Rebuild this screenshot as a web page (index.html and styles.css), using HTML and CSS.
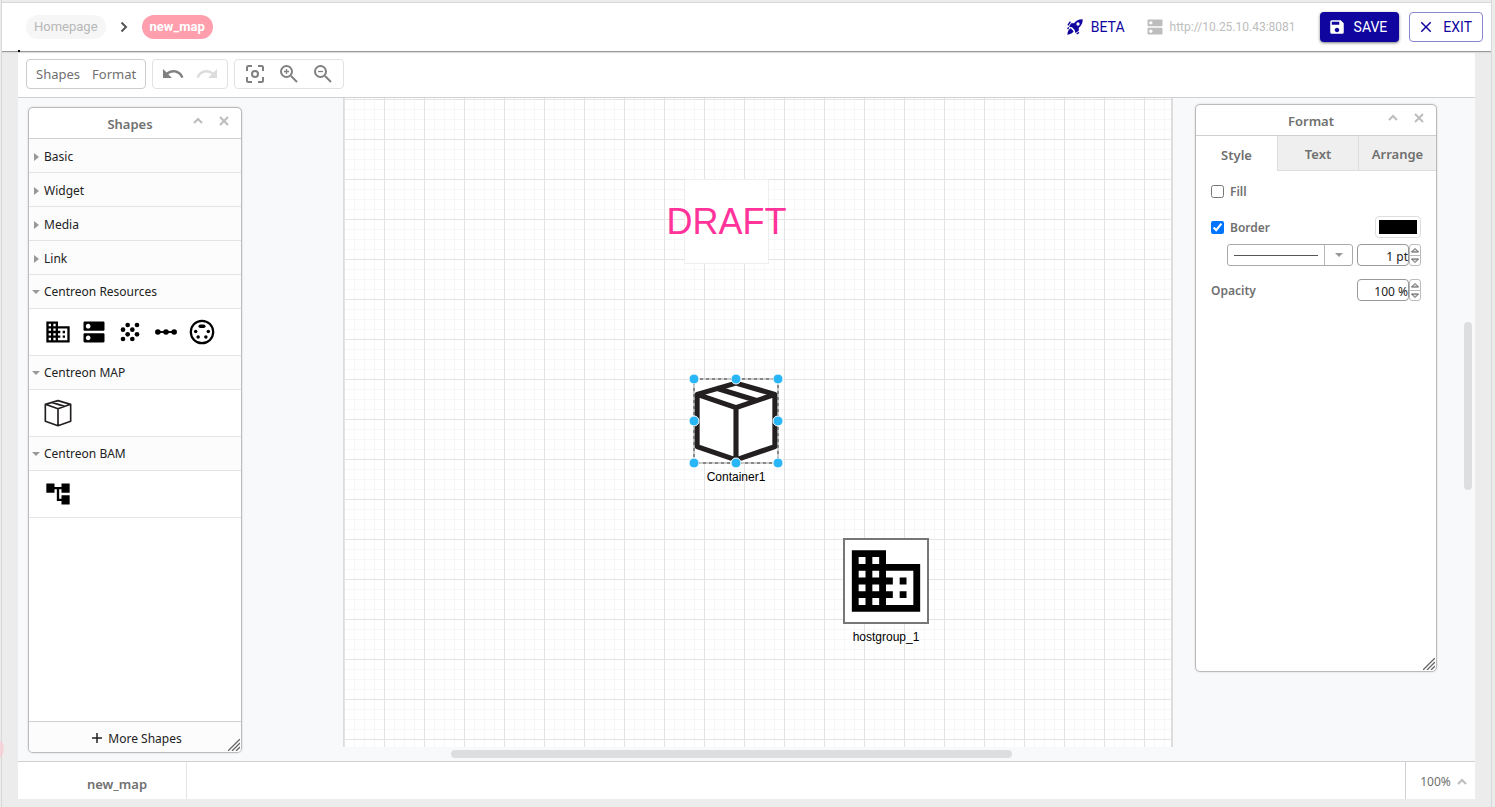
FILE: index.html
```html
<!DOCTYPE html>
<html lang="en">
<head>
<meta charset="utf-8">
<title>new_map</title>
<link rel="stylesheet" href="styles.css">
</head>
<body>
<svg class="defs" aria-hidden="true">
  <symbol id="i-group" viewBox="0 0 24 24"><path d="M12 7V3H2v18h20V7H12zM6 19H4v-2h2v2zm0-4H4v-2h2v2zm0-4H4V9h2v2zm0-4H4V5h2v2zm4 12H8v-2h2v2zm0-4H8v-2h2v2zm0-4H8V9h2v2zm0-4H8V5h2v2zm10 12h-8v-2h2v-2h-2v-2h2v-2h-2V9h8v10zm-2-8h-2v2h2v-2zm0 4h-2v2h2v-2z"/></symbol>
  <symbol id="i-host" viewBox="0 0 24 24"><path d="M20 13H4c-.55 0-1 .45-1 1v6c0 .55.45 1 1 1h16c.55 0 1-.45 1-1v-6c0-.55-.45-1-1-1zM7 19c-1.100 0-2-.9-2-2s.9-2 2-2 2 .9 2 2-.9 2-2 2zM20 3H4c-.55 0-1 .45-1 1v6c0 .55.45 1 1 1h16c.55 0 1-.45 1-1V4c0-.55-.45-1-1-1zM7 9c-1.100 0-2-.9-2-2s.9-2 2-2 2 .9 2 2-.9 2-2 2z"/></symbol>
  <symbol id="i-box" viewBox="0 0 84 84"><path d="M42 5L80 16v51L42 80 4 67V16zM4 16l38 13 38-13M42 29v51M23 10l39 12" fill="none" stroke="#231f20" stroke-linejoin="round"/></symbol>
  <symbol id="i-up" viewBox="0 0 10 10"><path d="M1 7l4-4 4 4" fill="none" stroke="#bdbdbd" stroke-width="2"/></symbol>
  <symbol id="i-x" viewBox="0 0 10 10"><path d="M1 1l8 8M9 1L1 9" fill="none" stroke="#bdbdbd" stroke-width="2"/></symbol>
  <symbol id="i-grip" viewBox="0 0 12 12"><path d="M0 12L12 0M4 12l8-8M8 12l4-4" fill="none" stroke="#666" stroke-width="1.3"/></symbol>
  <symbol id="i-step-up" viewBox="0 0 10 10"><path d="M1.500 7h7L5 3.500z" fill="#ddd" stroke="#555"/></symbol>
  <symbol id="i-step-down" viewBox="0 0 10 10"><path d="M1.500 3h7L5 6.500z" fill="#ddd" stroke="#555"/></symbol>
</svg>
<div class="frame">
  <header class="topbar">
    <nav class="crumbs" aria-label="Breadcrumb">
      <a class="chip" href="#">Homepage</a>
      <svg class="chevron" viewBox="0 0 8 12"><path d="M1.500 1.500L6 6l-4.500 4.500" fill="none" stroke="#555" stroke-width="2"/></svg>
      <a class="chip chip-current" href="#">new_map</a>
    </nav>
    <div class="actions">
      <a class="beta" href="#">
        <svg class="i16" viewBox="0 0 24 24"><path fill="#10069f" fill-rule="evenodd" d="M23.500.5c.3 5-1.500 9-6 13l.3 2.500c.1 1-.3 1.800-1 2.300L12.500 21l-1-4.500-4-4L3 11.500 5.700 7.200c.5-.7 1.300-1.100 2.300-1l2.500.3C14 2.500 18 .2 23.500.5zM16.500 5a2.500 2.500 0 100 5 2.500 2.500 0 000-5z"/><path d="M5.500 14l4.500 4.500C8.500 21.500 5.500 23 .5 23.500 1 18.500 2.500 15.500 5.500 14z" fill="#10069f"/><path d="M1.500 9.500L5 4M.8 15l2-2.500M14.500 22.500L18 20" stroke="#10069f" stroke-width="2.200"/></svg>
        BETA</a>
      <div class="server">
        <svg class="i20" viewBox="0 0 24 24" fill="#bdbdbd"><use href="#i-host"/></svg>
        <span>http://10.25.10.43:8081</span>
      </div>
      <button class="btn btn-save"><svg class="i18" viewBox="0 0 24 24"><path fill="#fff" d="M17 3H5a2 2 0 00-2 2v14a2 2 0 002 2h14a2 2 0 002-2V7l-4-4zm-5 16c-1.660 0-3-1.340-3-3s1.340-3 3-3 3 1.340 3 3-1.340 3-3 3zm3-10H5V5h10v4z"/></svg>SAVE</button>
      <button class="btn btn-exit"><svg class="i18" viewBox="0 0 24 24"><path fill="#10069f" d="M19 6.410L17.590 5 12 10.590 6.410 5 5 6.410 10.590 12 5 17.590 6.410 19 12 13.410 17.590 19 19 17.590 13.410 12z"/></svg>EXIT</button>
    </div>
    <span class="caret"></span>
  </header>

  <main class="app">
    <div class="toolbar">
      <div class="tools tools-text">
        <button class="tool-text">Shapes</button>
        <button class="tool-text">Format</button>
      </div>
      <div class="tools tools-history">
        <button class="tool" aria-label="Undo"><svg class="i24" viewBox="0 0 24 24"><path fill="#808080" d="M12.500 8c-2.650 0-5.050.990-6.900 2.600L2 7v9h9l-3.620-3.620c1.390-1.160 3.160-1.880 5.120-1.880 3.540 0 6.550 2.310 7.600 5.500l2.370-.780C21.080 11.030 17.150 8 12.500 8z"/></svg></button>
        <button class="tool" aria-label="Redo"><svg class="i24" viewBox="0 0 24 24"><path fill="#dcdcdc" d="M18.400 10.600C16.550 8.990 14.150 8 11.500 8c-4.650 0-8.580 3.030-9.960 7.220L3.900 16c1.050-3.190 4.050-5.500 7.600-5.500 1.950 0 3.730.720 5.120 1.880L13 16h9V7l-3.600 3.600z"/></svg></button>
      </div>
      <div class="tools tools-zoom">
        <button class="tool" aria-label="Fit"><svg class="i24" viewBox="0 0 24 24" fill="none" stroke="#808080" stroke-width="2"><path d="M4 9V5.500Q4 4 5.500 4H9M15 4h3.500Q20 4 20 5.500V9M20 15v3.500q0 1.500-1.500 1.500H15M9 20H5.500Q4 20 4 18.500V15"/><circle cx="12" cy="12" r="3"/></svg></button>
        <button class="tool" aria-label="Zoom in"><svg class="i24" viewBox="0 0 24 24" fill="none" stroke="#808080" stroke-width="2"><circle cx="9.500" cy="9.500" r="5.500"/><path d="M14 14l6 6"/><path d="M9.500 7v5M7 9.500h5" stroke-width="1.300"/></svg></button>
        <button class="tool" aria-label="Zoom out"><svg class="i24" viewBox="0 0 24 24" fill="none" stroke="#808080" stroke-width="2"><circle cx="9.500" cy="9.500" r="5.500"/><path d="M14 14l6 6"/><path d="M7 9.500h5" stroke-width="1.300"/></svg></button>
      </div>
    </div>

    <div class="workspace">
      <div class="page">
        <div class="node node-draft"><span>DRAFT</span></div>
        <div class="node node-container">
          <svg class="node-art" viewBox="0 0 84 84" stroke-width="5"><use href="#i-box"/></svg>
          <svg class="selection" viewBox="0 0 96 96">
            <rect x="6" y="6" width="84" height="84" fill="none" stroke="#999"/>
            <rect x="6" y="6" width="84" height="84" fill="none" stroke="#444" stroke-dasharray="3 3"/>
            <g fill="#29b6f6" stroke="#fff"><circle cx="6" cy="6" r="5"/><circle cx="48" cy="6" r="5"/><circle cx="90" cy="6" r="5"/><circle cx="6" cy="48" r="5"/><circle cx="90" cy="48" r="5"/><circle cx="6" cy="90" r="5"/><circle cx="48" cy="90" r="5"/><circle cx="90" cy="90" r="5"/></g>
          </svg>
          <span class="node-label">Container1</span>
        </div>
        <div class="node node-group">
          <svg class="node-art node-framed" viewBox="0 0 24 24"><use href="#i-group"/></svg>
          <span class="node-label">hostgroup_1</span>
        </div>
      </div>
      <div class="bar-h"></div>
      <div class="bar-v"></div>

      <section class="panel panel-shapes">
        <header class="panel-head"><h2>Shapes</h2>
          <button class="tool" aria-label="Collapse"><svg class="i10"><use href="#i-up"/></svg></button>
          <button class="tool" aria-label="Close"><svg class="i10"><use href="#i-x"/></svg></button>
        </header>
        <button class="section">Basic</button>
        <button class="section">Widget</button>
        <button class="section">Media</button>
        <button class="section">Link</button>
        <button class="section open">Centreon Resources</button>
        <div class="shapes">
          <button class="tool" aria-label="Host group"><svg class="i28" viewBox="0 0 24 24"><use href="#i-group"/></svg></button>
          <button class="tool" aria-label="Host"><svg class="i28" viewBox="0 0 24 24"><use href="#i-host"/></svg></button>
          <button class="tool" aria-label="Service group"><svg class="i28" viewBox="0 0 24 24"><g><circle cx="10" cy="6" r="2"/><circle cx="18" cy="6" r="2"/><circle cx="6" cy="10" r="2"/><circle cx="14" cy="10" r="2"/><circle cx="10" cy="14" r="2"/><circle cx="18" cy="14" r="2"/><circle cx="6" cy="18" r="2"/><circle cx="14" cy="18" r="2"/></g></svg></button>
          <button class="tool" aria-label="Service"><svg class="i28" viewBox="0 0 24 24"><path d="M4 12h16" stroke="#000" stroke-width="1.600"/><circle cx="5" cy="12" r="2.400"/><circle cx="12" cy="12" r="2.400"/><circle cx="19" cy="12" r="2.400"/></svg></button>
          <button class="tool" aria-label="Meta service"><svg class="i28" viewBox="0 0 24 24"><circle cx="12" cy="12" r="9.600" fill="none" stroke="#000" stroke-width="1.900"/><rect x="9" y="5.500" width="6" height="3" rx="1.500"/><circle cx="6.600" cy="11.500" r="1.500"/><circle cx="17.400" cy="11.500" r="1.500"/><circle cx="8.700" cy="16.200" r="1.500"/><circle cx="15.300" cy="16.200" r="1.500"/></svg></button>
        </div>
        <button class="section open">Centreon MAP</button>
        <div class="shapes"><button class="tool" aria-label="Container"><svg class="i28" viewBox="0 0 84 84" stroke-width="5"><use href="#i-box"/></svg></button></div>
        <button class="section open">Centreon BAM</button>
        <div class="shapes"><button class="tool" aria-label="Business activity"><svg class="i28" viewBox="0 0 24 24"><path d="M22 11V3h-7v3H9V3H2v8h7V8h2v10h4v3h7v-8h-7v3h-2V8h2v3z"/></svg></button></div>
        <button class="more"><svg class="i10" viewBox="0 0 10 10"><path d="M5 0v10M0 5h10" stroke="#222" stroke-width="1.500"/></svg>More Shapes</button>
        <svg class="grip"><use href="#i-grip"/></svg>
      </section>

      <section class="panel panel-format">
        <header class="panel-head"><h2>Format</h2>
          <button class="tool" aria-label="Collapse"><svg class="i10"><use href="#i-up"/></svg></button>
          <button class="tool" aria-label="Close"><svg class="i10"><use href="#i-x"/></svg></button>
        </header>
        <div class="tabs" role="tablist">
          <button class="tab active" role="tab" aria-selected="true">Style</button>
          <button class="tab" role="tab">Text</button>
          <button class="tab" role="tab">Arrange</button>
        </div>
        <div class="options">
          <label class="check fill-row"><input type="checkbox">Fill</label>
          <div class="row">
            <label class="check"><input type="checkbox" checked>Border</label>
            <button class="swatch" aria-label="Border color"></button>
          </div>
          <div class="row row-line">
            <button class="line-style" aria-label="Line style"><span class="line-sample"></span><span class="line-arrow"></span></button>
            <div class="stepper"><input type="text" value="1 pt" aria-label="Border width">
              <div class="steps"><button aria-label="Increase width"><svg class="i10"><use href="#i-step-up"/></svg></button><button aria-label="Decrease width"><svg class="i10"><use href="#i-step-down"/></svg></button></div></div>
          </div>
          <div class="row row-opacity">
            <label for="opacity">Opacity</label>
            <div class="stepper"><input id="opacity" type="text" value="100 %">
              <div class="steps"><button aria-label="Increase opacity"><svg class="i10"><use href="#i-step-up"/></svg></button><button aria-label="Decrease opacity"><svg class="i10"><use href="#i-step-down"/></svg></button></div></div>
          </div>
        </div>
        <svg class="grip"><use href="#i-grip"/></svg>
      </section>
    </div>

    <footer class="statusbar">
      <button class="map-tab">new_map</button>
      <button class="zoom-level">100%<svg class="i10"><use href="#i-up"/></svg></button>
    </footer>
  </main>
</div>
<span class="edge-dot"></span>
</body>
</html>
```
FILE: styles.css
```css
*, *::before { box-sizing: border-box; }
body { margin: 0; background: #ececec; font-family: "Noto Sans", "Open Sans", sans-serif; font-size: 12px; color: #707070; overflow: hidden; }
button { font: inherit; color: inherit; background: none; border: 0; padding: 0; cursor: pointer; }
a { color: inherit; text-decoration: none; }
svg { display: block; flex: none; }
.defs { position: absolute; width: 0; height: 0; }
.i10 { width: 10px; height: 10px; }
.i16 { width: 16px; height: 16px; }
.i18 { width: 18px; height: 18px; }
.i20 { width: 20px; height: 20px; }
.i24 { width: 24px; height: 24px; }
.i28 { width: 28px; height: 28px; }

.frame { height: 100vh; margin: 0 3px 0 1px; padding: 2px 0 8px; display: flex; flex-direction: column; border: 1px solid #d8d8d8; border-width: 0 1px; }
.topbar { position: relative; flex: none; height: 50px; display: flex; justify-content: space-between; align-items: center; padding: 0 8px 0 24px; background: #fff; border-top: 1px solid #d8d8d8; border-bottom: 1px solid #999; box-shadow: 0 1px 1px #ddd; font-family: Roboto, "Liberation Sans", sans-serif; font-size: 14px; z-index: 1; }
.caret { position: absolute; left: 16px; bottom: -1px; width: 2px; height: 2px; background: #000; }
.crumbs { display: flex; align-items: center; gap: 14px; }
.chip { height: 24px; line-height: 24px; padding: 0 8px; border-radius: 12px; background: #f6f6f6; color: #b8b8b8; font-size: 13px; }
.chip-current { background: #ff9fae; color: #fff; font-weight: 700; }
.chevron { width: 8px; height: 12px; }
.actions { display: flex; align-items: center; color: #10069f; }
.beta { display: flex; align-items: center; gap: 8px; margin-right: 20px; }
.server { display: flex; align-items: center; gap: 5px; margin-right: 24px; color: #bdbdbd; font-size: 12px; }
.btn { height: 30px; display: flex; align-items: center; border-radius: 4px; }
.btn-save { background: #10069f; color: #fff; gap: 8px; padding: 0 12px 0 8px; margin-right: 10px; box-shadow: 0 1px 3px #777; }
.btn-exit { border: 1px solid #8a85cf; gap: 8px; padding: 0 10px 0 7px; }

.app { flex: 1; min-height: 0; margin: 0 16px; display: flex; flex-direction: column; background: #fff; }
.toolbar { flex: none; height: 46px; display: flex; align-items: center; gap: 6px; padding: 0 8px 2px; border-bottom: 1px solid #d0d0d4; }
.tools { height: 30px; display: flex; align-items: center; border: 1px solid #e2e2e2; border-radius: 4px; }
.tools-text { gap: 12px; padding: 0 9px; border-color: #ccc; font-size: 13px; }
.tools-history { gap: 10px; padding: 0 8px; }
.tools-zoom { gap: 10px; padding: 0 8px; }

.workspace { position: relative; flex: 1; min-height: 0; background: #f8f9fb; padding: 0 302px 14px 325px; }
.page { position: relative; height: 100%; overflow: hidden; border: 1px solid #ddd; border-width: 0 2px 0 1px; background-color: #fff; background-image: linear-gradient(#e3e3e3 1px, transparent 1px), linear-gradient(90deg, #e3e3e3 1px, transparent 1px), linear-gradient(#f7f7f7 1px, transparent 1px), linear-gradient(90deg, #f7f7f7 1px, transparent 1px); background-size: 40px 40px, 40px 40px, 10px 10px, 10px 10px; background-position: 0 1px; }
.bar-h { position: absolute; left: 433px; right: 463px; bottom: 3px; height: 8px; border-radius: 4px; background: #dcdee0; }
.bar-v { position: absolute; right: 3px; top: 224px; width: 8px; height: 168px; border-radius: 4px; background: #dcdee0; }

.node { position: absolute; display: flex; flex-direction: column; align-items: center; width: 86px; font-family: "Liberation Sans", Arial, sans-serif; color: #000; }
.node-draft { left: 340px; top: 81px; width: 85px; height: 85px; justify-content: center; background: #fff; border: 1px solid #eee; font-size: 36px; color: #ff3399; white-space: nowrap; }
.node-container { left: 349px; top: 280px; }
.node-group { left: 499px; top: 440px; }
.node-art { width: 86px; height: 86px; background: #fff; }
.node-framed { border: 2px solid #777; }
.node-label { margin-top: 5px; line-height: 16px; white-space: nowrap; }
.selection { position: absolute; left: -5px; top: -5px; width: 96px; height: 96px; }

.panel { position: absolute; display: flex; flex-direction: column; background: #fff; border: 1px solid #bbb; border-radius: 5px; box-shadow: 0 0 2px #ccc; overflow: hidden; }
.panel-shapes { left: 10px; top: 9px; bottom: 8px; width: 214px; }
.panel-format { right: 38px; top: 6px; width: 242px; height: 568px; }
.panel-head { flex: none; height: 31px; display: flex; align-items: center; gap: 16px; padding: 0 12px 4px 0; border-bottom: 1px solid #d0d0d0; }
.panel-head h2 { flex: 1; margin: 0; padding: 6px 0 0 54px; text-align: center; font-size: 13px; font-weight: 600; }
.section { flex: none; height: 34px; display: flex; align-items: center; gap: 5px; padding: 2px 5px 0; background: #fcfcfc; border-bottom: 1px solid #e4e4e4; color: #222; font-size: 12px; }
.section::before { content: ""; border: solid transparent; border-width: 4px 0 4px 5px; border-left-color: #999; }
.section.open { padding: 0 3px; gap: 4px; }
.section.open::before { border-width: 4px 4px 0; border-color: #999 transparent; }
.shapes { flex: none; height: 47px; display: flex; align-items: center; gap: 8px; padding: 0 15px; border-bottom: 1px solid #e4e4e4; }
.more { flex: none; height: 31px; margin-top: auto; display: flex; align-items: center; justify-content: center; gap: 6px; padding: 2px 0 0 4px; background: #fcfcfc; border-top: 1px solid #d0d0d0; color: #222; }
.grip { position: absolute; right: 1px; bottom: 1px; width: 12px; height: 12px; }

.tabs { flex: none; display: grid; grid-template-columns: 81px 81px 1fr; height: 35px; font-size: 13px; font-weight: 600; }
.tab { padding-top: 2px; border-left: 1px solid #ddd; border-bottom: 1px solid #ddd; background: #efefef; }
.tab.active { border: 0; background: #fff; }
.options { padding: 8px 15px; font-weight: 600; }
.check { display: flex; align-items: center; gap: 6px; }
.check input { margin: 0; width: 13px; height: 13px; }
.fill-row { height: 24px; margin-bottom: 13px; }
.row { display: flex; align-items: center; justify-content: space-between; height: 22px; }
.swatch { width: 46px; height: 22px; padding: 3px; border: 1px solid #ddd; border-radius: 4px; background: #000 content-box; }
.row-line { margin-top: 6px; padding-left: 16px; }
.row-opacity { margin-top: 13px; }
.line-style { width: 126px; height: 22px; display: flex; align-items: center; border: 1px solid #aaa; border-radius: 3px; }
.line-sample { flex: 1; height: 1px; margin: 0 6px; background: #555; }
.line-arrow { display: flex; align-items: center; justify-content: center; width: 28px; height: 20px; border-left: 1px solid #bbb; }
.line-arrow::before { content: ""; border: solid transparent; border-width: 4px 4px 0; border-top-color: #999; }
.stepper { display: flex; width: 64px; }
.stepper input { width: 52px; height: 22px; padding: 2px 0 0; border: 1px solid #999; border-radius: 4px; text-align: right; font: inherit; font-weight: 400; color: #222; background: #fff; }
.steps { width: 12px; display: flex; flex-direction: column; border: 1px solid #bbb; border-radius: 3px; }
.steps button { height: 10px; }
.steps button + button { border-top: 1px solid #bbb; }

.statusbar { flex: none; height: 38px; display: flex; justify-content: space-between; border-top: 1px solid #d0d0d4; }
.map-tab { width: 169px; padding: 6px 0 0 30px; border-right: 1px solid #e4e4e4; font-size: 13px; font-weight: 600; }
.zoom-level { width: 70px; display: flex; align-items: center; justify-content: center; gap: 6px; padding: 2px 0 0 6px; border-left: 1px solid #d0d0d4; }
.edge-dot { position: absolute; left: -20px; top: 737px; width: 24px; height: 24px; border-radius: 12px; background: #ffc8d0; opacity: .6; }
```
